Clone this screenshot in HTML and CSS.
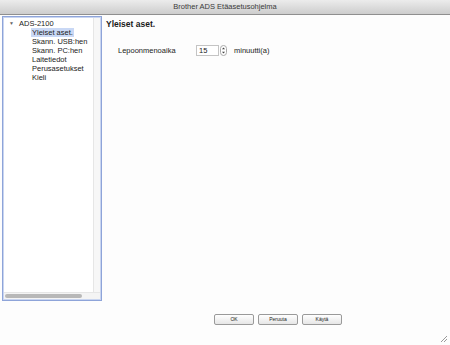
FILE: index.html
```html
<!doctype html>
<html lang="fi">
<head>
  <meta charset="UTF-8">
  <title>Brother ADS Etäasetusohjelma</title>
  <link rel="stylesheet" href="styles.css">
</head>
<body>
  <div id="window">
    <div class="titlebar">Brother ADS Etäasetusohjelma</div>

    <div class="main">
      <div class="tree-panel">
        <div class="tree-view">
          <div class="tree-list">
            <div class="tree-root"><span class="arrow">▼</span>ADS-2100</div>
            <div class="tree-item selected">Yleiset aset.</div>
            <div class="tree-item">Skann. USB:hen</div>
            <div class="tree-item">Skann. PC:hen</div>
            <div class="tree-item">Laitetiedot</div>
            <div class="tree-item">Perusasetukset</div>
            <div class="tree-item">Kieli</div>
          </div>
          <div class="vscroll"></div>
        </div>
        <div class="hscroll"><div class="hthumb"></div></div>
      </div>

      <div class="content">
        <div class="heading">Yleiset aset.</div>
        <div class="setting-row">
          <span class="setting-label">Lepoonmenoaika</span>
          <span class="number-field">15</span>
          <span class="stepper">
            <svg width="7" height="11" viewBox="0 0 7 11">
              <rect x="0.5" y="0.5" width="6" height="10" rx="3" fill="#fff" stroke="#a8a8a8"/>
              <path d="M2 4.2 L3.5 2.5 L5 4.2 Z" fill="#444"/>
              <path d="M2 6.8 L3.5 8.5 L5 6.8 Z" fill="#444"/>
            </svg>
          </span>
          <span class="unit">minuutti(a)</span>
        </div>
      </div>
    </div>

    <div class="footer">
      <div class="btn">OK</div>
      <div class="btn">Peruuta</div>
      <div class="btn">Käytä</div>
    </div>

    <svg class="grip" width="7" height="7" viewBox="0 0 7 7">
      <path d="M1 7 L7 1 M4 7 L7 4" stroke="#9a9a9a" stroke-width="1"/>
    </svg>
  </div>
</body>
</html>
```

FILE: styles.css
```css
body {
    margin: 0;
    background: #fdfdfd;
    font-family: "Liberation Sans", Arial, sans-serif;
    color: #222;
}

#window {
    position: relative;
    width: 450px;
    height: 345px;
    background: #fdfdfd;
}

.titlebar {
    height: 14px;
    line-height: 14px;
    text-align: center;
    font-size: 7.5px;
    color: #3a3a3a;
    background: linear-gradient(#ececec, #cdcdcd);
    border-bottom: 1px solid #8f8f8f;
}

.main {
    display: flex;
    padding: 1px 0 0 2px;
    gap: 4px;
}

.tree-panel {
    box-sizing: border-box;
    width: 100px;
    height: 285px;
    border: 1px solid #8ea4d9;
    box-shadow: inset 0 0 0 1px #c9d5f0;
    display: flex;
    flex-direction: column;
    background: #fff;
    padding: 1px;
}

.tree-view {
    flex: 1;
    display: flex;
}

.tree-list {
    flex: 1;
    padding-top: 1px;
    font-size: 7.5px;
}

.tree-root {
    height: 9px;
    line-height: 9px;
    padding-left: 5px;
}

.arrow {
    display: inline-block;
    width: 10px;
    font-size: 5px;
    color: #666;
    vertical-align: top;
}

.tree-item {
    height: 9px;
    line-height: 9px;
    margin-left: 27px;
    padding-left: 1px;
    width: max-content;
    padding-right: 1px;
}

.tree-item.selected {
    background: #c9d8f5;
}

.vscroll {
    width: 6px;
    border-left: 1px solid #e6e6e6;
    background: #f7f7f7;
}

.hscroll {
    height: 7px;
    border-top: 1px solid #e6e6e6;
    background: #f4f4f4;
    padding: 1px 0 0 1px;
    box-sizing: border-box;
}

.hthumb {
    width: 77px;
    height: 4px;
    border-radius: 2px;
    background: #b8b8b8;
}

.content {
    flex: 1;
    padding-top: 2px;
}

.heading {
    font-size: 8.5px;
    font-weight: bold;
    color: #1a1a1a;
    height: 12px;
    line-height: 12px;
}

.setting-row {
    display: flex;
    align-items: center;
    margin-top: 15px;
    padding-left: 12px;
    font-size: 7.5px;
}

.setting-label {
    width: 78px;
}

.number-field {
    box-sizing: border-box;
    width: 23px;
    height: 11px;
    line-height: 10px;
    border: 1px solid #c4c4c4;
    padding-left: 2px;
    background: #fff;
}

.stepper {
    display: flex;
    margin-left: 1px;
}

.unit {
    margin-left: 7px;
}

.footer {
    display: flex;
    justify-content: center;
    gap: 4px;
    padding-left: 106px;
    margin-top: 13px;
}

.btn {
    box-sizing: border-box;
    width: 40px;
    height: 11px;
    line-height: 9px;
    text-align: center;
    font-size: 5px;
    color: #222;
    border: 1px solid #9a9a9a;
    border-radius: 2px;
    background: linear-gradient(#ffffff, #e6e6e6);
}

.grip {
    position: absolute;
    right: 3px;
    bottom: 3px;
}
```
